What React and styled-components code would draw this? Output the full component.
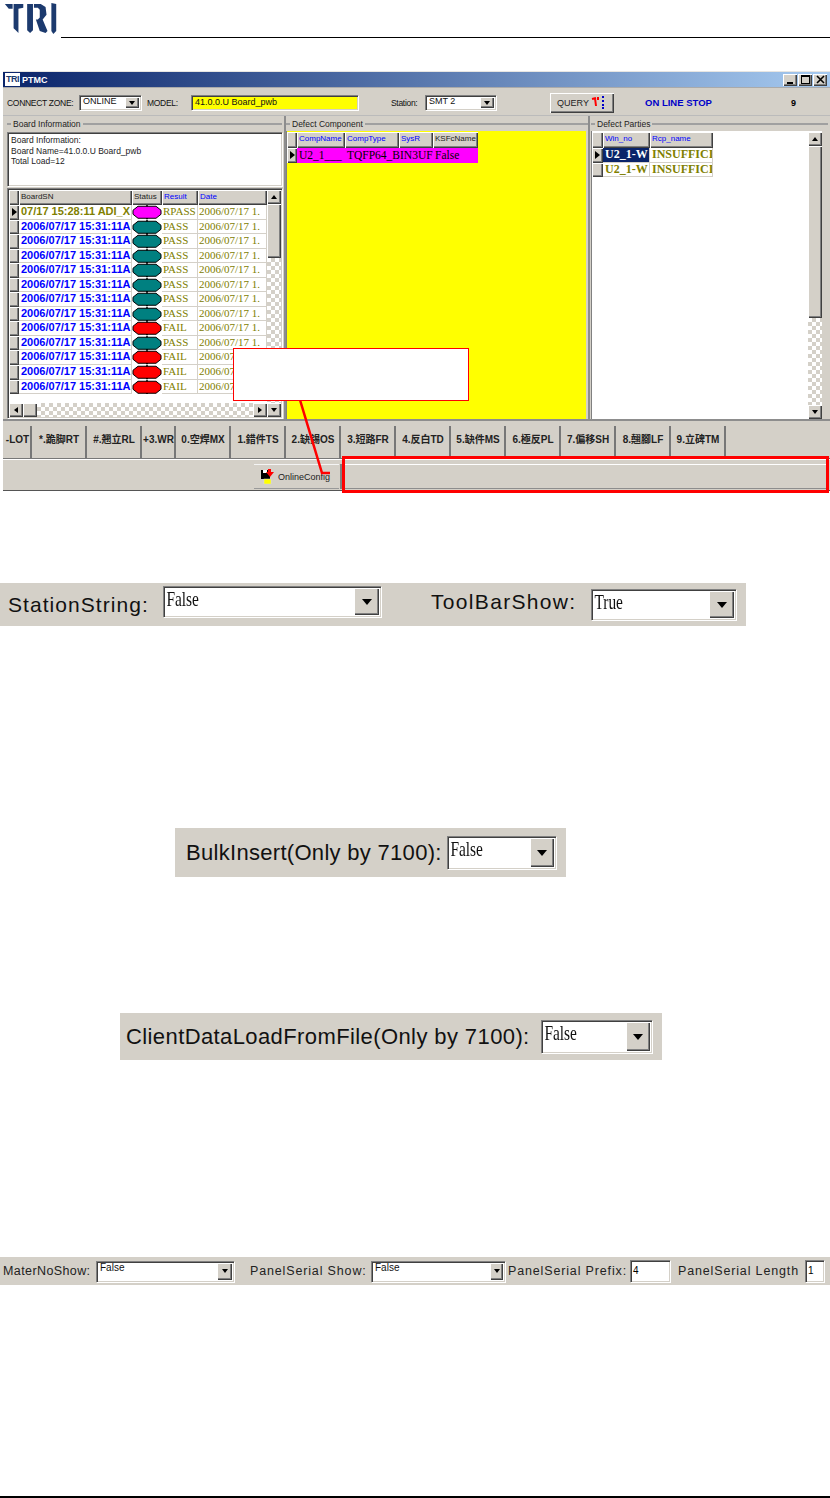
import React from 'react'
import styled, { createGlobalStyle, css } from 'styled-components'

const GlobalStyle = createGlobalStyle`
  html, body { margin: 0; padding: 0; background: #fff; }
  * { box-sizing: border-box; }
`

const FACE = '#d4d0c8'

const raised = css`
  background: ${FACE};
  box-shadow: inset 1px 1px 0 #fff, inset -1px -1px 0 #404040, inset -2px -2px 0 #808080;
`
const sunken = css`
  box-shadow: inset 1px 1px 0 #808080, inset 2px 2px 0 #404040, inset -1px -1px 0 ${FACE}, 1px 1px 0 #fff;
`

const rows = [
  ['07/17 15:28:11 ADI_X', 'magenta', 'RPASS', true],
  ...['PASS', 'PASS', 'PASS', 'PASS', 'PASS', 'PASS', 'PASS', 'FAIL', 'PASS', 'FAIL', 'FAIL', 'FAIL'].map(r => [
    '2006/07/17 15:31:11A',
    r === 'PASS' ? '#008080' : '#ff0000',
    r,
    false,
  ]),
]

const tabs = [
  ['-LOT', 27],
  ['*.跪脚RT', 54],
  ['#.翘立RL', 54],
  ['+3.WR', 33],
  ['0.空焊MX', 54],
  ['1.錯件TS', 54],
  ['2.缺錫OS', 54],
  ['3.短路FR', 54],
  ['4.反白TD', 54],
  ['5.缺件MS', 54],
  ['6.極反PL', 54],
  ['7.偏移SH', 54],
  ['8.翹腳LF', 54],
  ['9.立碑TM', 54],
]

const Logo = () => (
  <LogoSvg viewBox="0 0 56 32">
    <path d="M0 1h8v5l-4 0zM9 1h10v4l-5 1v25l-2-2-3-3z" fill="#1c3a6e" />
    <path d="M23 1h6v27l-3 3-3-3zM30 1h7l5 3 1 8-4 5 5 12-2 2-6-2-4-12h2l2-2v-8l-2-2h-4z" fill="#1c3a6e" />
    <path d="M48 0l5 1v28l-3 3-2-3z" fill="#1c3a6e" />
  </LogoSvg>
)

const Status = ({ color }) => (
  <StatusSvg viewBox="0 0 30 14">
    <path d="M15 0v14" stroke="#000" strokeWidth="2" />
    <polygon points="6,1 24,1 29,5 29,9 24,13 6,13 1,9 1,5" fill={color} stroke="#000" />
  </StatusSvg>
)

const SaveIcon = () => (
  <svg width="14" height="15" viewBox="0 0 14 15">
    <rect x="0" y="1" width="9" height="9" fill="#000" />
    <rect x="2" y="1" width="4" height="3" fill="#fff" />
    <path d="M7 0h3v3h3l-4 5-4-5h2z" fill="#f00" />
    <rect x="3" y="10" width="7" height="5" fill="#ff0" stroke="#ddd" strokeWidth=".5" />
  </svg>
)

const QueryIcon = () => (
  <svg width="16" height="14" viewBox="0 0 16 14">
    <path d="M1 3l4-1M4 2l1 8M7 1v3" stroke="#f00" strokeWidth="2" fill="none" />
    <path d="M11 1h2M11 5h2M11 9h2M11 12h2" stroke="#0000c8" strokeWidth="2" fill="none" />
  </svg>
)

const VScroll = ({ thumb, down = true }) => (
  <VBar>
    <ScrollBtn><Arrow $dir="up" /></ScrollBtn>
    <VThumb $h={thumb} />
    <Track />
    {down && <ScrollBtn><Arrow $dir="down" /></ScrollBtn>}
  </VBar>
)

const Select = ({ w, h, size, value, serif, btn, big }) => (
  <SelectBox $w={w} $h={h}>
    <SelectValue $size={size} $serif={serif} $stretch={big}>{value}</SelectValue>
    <SelectBtn $w={btn}><Arrow $dir="down" $big={big} /></SelectBtn>
  </SelectBox>
)

export default function App() {
  return (
    <Page>
      <GlobalStyle />
      <Header>
        <Logo />
        <HeaderRule />
      </Header>

      <Window>
        <TitleBar>
          <TitleIcon>TRI</TitleIcon>
          <TitleText>PTMC</TitleText>
          <WinButtons>
            <WinBtn>
              <svg width="9" height="9"><rect x="1" y="7" width="6" height="2" fill="#000" /></svg>
            </WinBtn>
            <WinBtn>
              <svg width="9" height="9"><rect x=".5" y="1.5" width="8" height="7" fill="none" stroke="#000" /><rect x="0" y="0" width="9" height="2" /></svg>
            </WinBtn>
            <WinBtn>
              <svg width="9" height="9"><path d="M1 1l7 7M8 1l-7 7" stroke="#000" strokeWidth="1.6" /></svg>
            </WinBtn>
          </WinButtons>
        </TitleBar>

        <Toolbar>
          <ToolLabel $w={72}>CONNECT ZONE:</ToolLabel>
          <Select w={62} h={15} size={9} value="ONLINE" btn={14} />
          <ToolLabel $w={44} $ml={6}>MODEL:</ToolLabel>
          <ModelInput>41.0.0.U Board_pwb</ModelInput>
          <ToolLabel $w={34} $ml={33}>Station:</ToolLabel>
          <Select w={71} h={15} size={9} value="SMT 2" btn={14} />
          <QueryButton>QUERY <QueryIcon /></QueryButton>
          <LineState>ON LINE STOP</LineState>
          <Counter>9</Counter>
        </Toolbar>

        <Panels>
          <LeftGroup>
            <GroupHead>Board Information</GroupHead>
            <Memo>
              <div>Board Information:</div>
              <div>Board Name=41.0.0.U Board_pwb</div>
              <div>Total Load=12</div>
            </Memo>
            <ResultGrid>
              <GridMain>
                <GridHead>
                  <Corner $w={10} />
                  <HeadCell $w={113} $black>BoardSN</HeadCell>
                  <HeadCell $w={30} $black>Status</HeadCell>
                  <HeadCell $w={36}>Result</HeadCell>
                  <HeadCell $w={69}>Date</HeadCell>
                </GridHead>
                {rows.map(([sn, color, result, current], i) => (
                  <ResultRow key={i}>
                    <Indicator $w={10} $on={current} />
                    <SnCell $w={113} $current={current}>{sn}</SnCell>
                    <StatusCell><Status color={color} /></StatusCell>
                    <OliveCell $w={36}>{result}</OliveCell>
                    <OliveCell $w={69}>2006/07/17 1.</OliveCell>
                  </ResultRow>
                ))}
                <GridFill />
                <HBar>
                  <ScrollBtn><Arrow $dir="left" /></ScrollBtn>
                  <HThumb />
                  <Track />
                  <ScrollBtn><Arrow $dir="right" /></ScrollBtn>
                </HBar>
              </GridMain>
              <VScroll thumb={54} />
            </ResultGrid>
          </LeftGroup>

          <MiddleGroup>
            <GroupHead>Defect Component</GroupHead>
            <YellowGrid>
              <GridHead $tall>
                <Corner $w={10} />
                <HeadCell $w={48}>CompName</HeadCell>
                <HeadCell $w={54}>CompType</HeadCell>
                <HeadCell $w={34}>SysR</HeadCell>
                <HeadCell $w={45} $black>KSFcName</HeadCell>
              </GridHead>
              <ResultRow>
                <Indicator $w={10} $on />
                <PinkCell $w={48}>U2_1___</PinkCell>
                <PinkCell $w={88}>TQFP64_BIN3UF</PinkCell>
                <PinkCell $w={45}>False</PinkCell>
              </ResultRow>
            </YellowGrid>
          </MiddleGroup>

          <RightGroup>
            <GroupHead>Defect Parties</GroupHead>
            <WhiteGrid>
              <GridMain>
                <GridHead $tall>
                  <Corner $w={11} />
                  <HeadCell $w={47}>Win_no</HeadCell>
                  <HeadCell $w={63}>Rcp_name</HeadCell>
                </GridHead>
                <ResultRow>
                  <Indicator $w={11} $on />
                  <SelectedCell $w={47}>U2_1-W</SelectedCell>
                  <PartyCell $w={63}>INSUFFICI</PartyCell>
                </ResultRow>
                <ResultRow>
                  <Indicator $w={11} />
                  <PartyCell $w={47}>U2_1-W</PartyCell>
                  <PartyCell $w={63}>INSUFFICI</PartyCell>
                </ResultRow>
              </GridMain>
              <VScroll thumb={172} />
            </WhiteGrid>
          </RightGroup>
        </Panels>

        <TabRow>
          {tabs.map(([label, w]) => (
            <TabBtn key={label} $w={w}>{label}</TabBtn>
          ))}
        </TabRow>

        <StatusBar>
          <ConfigBtn><SaveIcon />OnlineConfig</ConfigBtn>
          <Grip />
          <StatusPanel />
        </StatusBar>

        <Callout />
        <Leader width="50" height="82">
          <path d="M7 0L29 73H37" fill="none" stroke="#f00" strokeWidth="2.5" />
        </Leader>
        <Highlight />
      </Window>

      <Strip $top={92} $left={0} $w={746} $h={43}>
        <BigLabel $ml={8} $w={155} $size={21} $space={1.05}>StationString:</BigLabel>
        <StripSelect $up={6}><Select w={218} h={31} size={22} value="False" serif big btn={25} /></StripSelect>
        <BigLabel $ml={50} $w={160} $size={21} $space={1.33} $up={6}>ToolBarShow:</BigLabel>
        <StripSelect><Select w={145} h={31} size={22} value="True" serif big btn={25} /></StripSelect>
      </Strip>

      <Strip $top={202} $left={175} $w={391} $h={49}>
        <BigLabel $ml={11} $w={261} $size={22} $space={0.3}>BulkInsert(Only by 7100):</BigLabel>
        <Select w={109} h={33} size={22} value="False" serif big btn={24} />
      </Strip>

      <Strip $top={136} $left={120} $w={542} $h={47}>
        <BigLabel $ml={6} $w={415} $size={22} $space={0.4}>ClientDataLoadFromFile(Only by 7100):</BigLabel>
        <Select w={111} h={33} size={22} value="False" serif big btn={24} />
      </Strip>

      <Strip $top={197} $left={0} $w={830} $h={28}>
        <SmallLabel $ml={3} $w={93} $space={0.4}>MaterNoShow:</SmallLabel>
        <Select w={138} h={21} size={10} value="False" btn={15} />
        <SmallLabel $ml={16} $w={121}>PanelSerial Show:</SmallLabel>
        <Select w={134} h={21} size={10} value="False" btn={13} />
        <SmallLabel $ml={3} $w={122}>PanelSerial Prefix:</SmallLabel>
        <SmallInput $w={40}>4</SmallInput>
        <SmallLabel $ml={8} $w={127}>PanelSerial Length</SmallLabel>
        <SmallInput $w={19}>1</SmallInput>
      </Strip>

      <FooterRule />
    </Page>
  )
}

const Page = styled.div`
  width: 830px;
  height: 1498px;
  overflow: hidden;
  background: #fff;
  font-family: "Liberation Sans", Arial, sans-serif;
`

const Header = styled.div`
  height: 38px;
  display: flex;
  align-items: flex-start;
  padding: 3px 0 0 4px;
  gap: 1px;
`
const LogoSvg = styled.svg`
  width: 56px;
  height: 31px;
  flex: none;
  filter: blur(0.5px);
`
const HeaderRule = styled.div`
  flex: 1;
  height: 1px;
  margin-top: 34px;
  background: #000;
`

const Window = styled.div`
  position: relative;
  width: 827px;
  height: 420px;
  margin: 33px 0 0 3px;
  background: ${FACE};
  border-top: 1px solid #e8e6e2;
  border-bottom: 1px solid #555;
  display: flex;
  flex-direction: column;
`
const TitleBar = styled.div`
  height: 15px;
  flex: none;
  display: flex;
  align-items: center;
  padding: 0 3px 0 2px;
  background: linear-gradient(90deg, #0a246a, #a6caf0);
`
const TitleIcon = styled.span`
  width: 15px;
  height: 13px;
  background: #fff;
  color: #1c3a6e;
  font: bold 9px/13px "Liberation Sans", sans-serif;
  letter-spacing: -0.5px;
  text-align: center;
`
const TitleText = styled.span`
  margin-left: 2px;
  color: #fff;
  font: bold 9px "Liberation Sans", sans-serif;
`
const WinButtons = styled.div`
  margin-left: auto;
  display: flex;
  gap: 1px;
`
const WinBtn = styled.div`
  ${raised}
  width: 14px;
  height: 12px;
  display: flex;
  align-items: center;
  justify-content: center;
`

const Toolbar = styled.div`
  height: 29px;
  flex: none;
  display: flex;
  align-items: center;
  padding: 2px 0 0 4px;
  border-top: 1px solid #aaa;
  border-bottom: 1px solid #bbb;
`
const ToolLabel = styled.span`
  width: ${p => p.$w}px;
  margin-left: ${p => p.$ml || 0}px;
  flex: none;
  font-size: 8.5px;
  letter-spacing: -0.3px;
  color: #111;
  white-space: nowrap;
`
const ModelInput = styled.div`
  width: 167px;
  height: 15px;
  flex: none;
  padding-left: 4px;
  background: #ff0;
  font-size: 9px;
  line-height: 15px;
  color: #111;
  ${sunken}
`
const QueryButton = styled.div`
  ${raised}
  width: 64px;
  height: 20px;
  flex: none;
  margin-left: 54px;
  display: flex;
  align-items: center;
  justify-content: center;
  gap: 2px;
  font-size: 9px;
  color: #222;
`
const LineState = styled.span`
  width: 76px;
  flex: none;
  margin-left: 31px;
  color: #0000c8;
  font-size: 9.5px;
  font-weight: bold;
  white-space: nowrap;
`
const Counter = styled.span`
  margin-left: 70px;
  font-size: 9px;
  font-weight: bold;
`

const Panels = styled.div`
  height: 303px;
  flex: none;
  display: flex;
  padding-left: 2px;
`
const LeftGroup = styled.div`
  width: 279px;
  flex: none;
  display: flex;
  flex-direction: column;
  padding: 0 2px;
`
const MiddleGroup = styled(LeftGroup)`
  width: 304px;
  border-left: 2px solid #8d8d8d;
  padding: 0;
`
const RightGroup = styled(LeftGroup)`
  width: 240px;
  border-left: 2px solid #8d8d8d;
  padding: 0 0 0 1px;
`
const GroupHead = styled.div`
  height: 15px;
  flex: none;
  display: flex;
  align-items: center;
  gap: 2px;
  font-size: 8.5px;
  color: #222;
  white-space: nowrap;
  &::before, &::after {
    content: "";
    height: 2px;
    background: #a0a0a0;
  }
  &::before { width: 4px; }
  &::after { flex: 1; }
`
const Memo = styled.div`
  height: 54px;
  flex: none;
  margin-top: 1px;
  padding: 3px 4px;
  background: #fff;
  font-size: 8.5px;
  line-height: 10.5px;
  color: #222;
  ${sunken}
`
const ResultGrid = styled.div`
  margin-top: 2px;
  height: 230px;
  flex: none;
  display: flex;
  padding: 2px 1px 1px 2px;
  background: #fff;
  ${sunken}
`
const GridMain = styled.div`
  flex: 1;
  min-width: 0;
  display: flex;
  flex-direction: column;
`
const GridHead = styled.div`
  height: ${p => (p.$tall ? 16 : 15)}px;
  flex: none;
  display: flex;
`
const HeadCell = styled.div`
  ${raised}
  width: ${p => p.$w}px;
  flex: none;
  padding-left: 2px;
  overflow: hidden;
  white-space: nowrap;
  font-size: 8px;
  line-height: 14px;
  color: ${p => (p.$black ? '#222' : '#0000ff')};
`
const Corner = styled.div`
  ${raised}
  width: ${p => p.$w}px;
  flex: none;
`
const ResultRow = styled.div`
  height: 14.55px;
  flex: none;
  display: flex;
`
const Indicator = styled.div`
  ${raised}
  position: relative;
  width: ${p => p.$w}px;
  flex: none;
  ${p => p.$on && css`
    &::after {
      content: "";
      position: absolute;
      left: 3px;
      top: 3px;
      border: 4px solid transparent;
      border-left: 5px solid #000;
      border-right: 0;
    }
  `}
`
const Cell = styled.div`
  width: ${p => p.$w}px;
  flex: none;
  overflow: hidden;
  white-space: nowrap;
  padding-left: 2px;
  border-right: 1px solid ${FACE};
  border-bottom: 1px solid ${FACE};
`
const SnCell = styled(Cell)`
  color: ${p => (p.$current ? '#808000' : '#0000ff')};
  font-size: 11px;
  font-weight: bold;
  line-height: 13px;
`
const StatusCell = styled.div`
  width: 30px;
  flex: none;
  display: flex;
`
const StatusSvg = styled.svg`
  width: 30px;
  height: 14.5px;
  display: block;
`
const OliveCell = styled(Cell)`
  padding-left: 1px;
  color: #808000;
  font-family: "Liberation Serif", serif;
  font-size: 11px;
  line-height: 13px;
`
const GridFill = styled.div`
  flex: 1;
`
const HBar = styled.div`
  height: 14px;
  flex: none;
  display: flex;
`
const VBar = styled.div`
  width: 14px;
  flex: none;
  display: flex;
  flex-direction: column;
`
const ScrollBtn = styled.div`
  ${raised}
  width: 14px;
  height: 14px;
  flex: none;
  display: flex;
  align-items: center;
  justify-content: center;
`
const Track = styled.div`
  flex: 1;
  background: repeating-conic-gradient(${FACE} 0 25%, #fff 0 50%) 0 0 / 8px 8px;
`
const VThumb = styled.div`
  ${raised}
  height: ${p => p.$h}px;
  flex: none;
`
const HThumb = styled.div`
  ${raised}
  width: 14px;
  flex: none;
`
const arrows = {
  up: 'border-width: 0 3.5px 4px; border-color: transparent transparent #000;',
  down: 'border-width: 4px 3.5px 0; border-color: #000 transparent transparent;',
  left: 'border-width: 3.5px 4px 3.5px 0; border-color: transparent #000 transparent transparent;',
  right: 'border-width: 3.5px 0 3.5px 4px; border-color: transparent transparent transparent #000;',
}
const Arrow = styled.span`
  width: 0;
  height: 0;
  border-style: solid;
  ${p => arrows[p.$dir]}
  ${p => p.$big && 'border-width: 6px 5px 0;'}
`

const YellowGrid = styled.div`
  height: 288px;
  flex: none;
  margin-right: 2px;
  display: flex;
  flex-direction: column;
  padding: 1px 0 0 1px;
  background: #ff0;
  box-shadow: inset 1px 0 0 #808080;
`
const PinkCell = styled(Cell)`
  background: #f0f;
  border: 0;
  color: #000;
  font-family: "Liberation Serif", serif;
  font-size: 11.5px;
  line-height: 14px;
`
const WhiteGrid = styled.div`
  height: 288px;
  width: 231px;
  flex: none;
  display: flex;
  padding: 1px 0 0 1px;
  background: #fff;
  box-shadow: inset 1px 0 0 #808080;
`
const PartyCell = styled(Cell)`
  color: #808000;
  font-family: "Liberation Serif", serif;
  font-size: 12px;
  font-weight: bold;
  line-height: 13px;
`
const SelectedCell = styled(PartyCell)`
  background: #0a246a;
  color: #fff;
`

const TabRow = styled.div`
  height: 40px;
  flex: none;
  display: flex;
  align-items: stretch;
  gap: 1px;
  padding: 5px 0 0 2px;
  border-top: 2px solid #8d8d8d;
  border-bottom: 1px solid #777;
`
const TabBtn = styled.div`
  width: ${p => p.$w}px;
  flex: none;
  border-right: 2px solid #777;
  font-family: "Liberation Sans", "Noto Sans CJK TC", sans-serif;
  font-size: 10px;
  font-weight: bold;
  line-height: 28px;
  text-align: center;
  white-space: nowrap;
  overflow: hidden;
  color: #222;
`

const StatusBar = styled.div`
  flex: 1;
  display: flex;
  justify-content: flex-end;
  align-items: stretch;
  padding: 4px 2px 1px 251px;
  border-top: 1px solid #fff;
`
const ConfigBtn = styled.div`
  width: 85px;
  flex: none;
  display: flex;
  align-items: center;
  gap: 3px;
  padding-left: 7px;
  border-top: 1px solid #f4f4f4;
  border-bottom: 1px solid #999;
  font-size: 9px;
  white-space: nowrap;
  overflow: hidden;
  color: #222;
`
const Grip = styled.div`
  width: 3px;
  flex: none;
  margin: 0 2px 0 1px;
  background: #808080;
`
const StatusPanel = styled.div`
  flex: 1;
  border-top: 1px solid #fff;
  border-bottom: 1px solid #8d8d8d;
  border-right: 1px solid #8d8d8d;
`

const Callout = styled.div`
  position: absolute;
  left: 230px;
  top: 276px;
  width: 236px;
  height: 53px;
  background: #fff;
  border: 1px solid #f00;
`
const Leader = styled.svg`
  position: absolute;
  left: 290px;
  top: 328px;
`
const Highlight = styled.div`
  position: absolute;
  left: 339px;
  top: 384px;
  width: 487px;
  height: 37px;
  border: 3px solid #f00;
`

const Strip = styled.div`
  width: ${p => p.$w}px;
  height: ${p => p.$h}px;
  margin: ${p => p.$top}px 0 0 ${p => p.$left}px;
  display: flex;
  align-items: center;
  background: ${FACE};
  overflow: hidden;
`
const BigLabel = styled.span`
  width: ${p => p.$w}px;
  margin-left: ${p => p.$ml}px;
  padding-bottom: ${p => p.$up || 0}px;
  flex: none;
  font-size: ${p => p.$size}px;
  letter-spacing: ${p => p.$space}px;
  color: #111;
  white-space: nowrap;
`
const SmallLabel = styled.span`
  width: ${p => p.$w}px;
  margin-left: ${p => p.$ml}px;
  flex: none;
  font-size: 12.5px;
  letter-spacing: ${p => p.$space ?? 0.85}px;
  color: #222;
  white-space: nowrap;
`
const StripSelect = styled.div`
  flex: none;
  padding-bottom: ${p => p.$up || 0}px;
`
const SelectBox = styled.div`
  width: ${p => p.$w}px;
  height: ${p => p.$h}px;
  flex: none;
  display: flex;
  justify-content: space-between;
  padding: 2px;
  background: #fff;
  ${sunken}
`
const SelectValue = styled.span`
  padding-left: 2px;
  font-family: ${p => (p.$serif ? '"Liberation Serif", serif' : '"Liberation Sans", sans-serif')};
  font-size: ${p => p.$size}px;
  line-height: 1;
  color: #111;
  ${p => p.$stretch && css`
    display: inline-block;
    transform: scaleX(0.7);
    transform-origin: left top;
  `}
`
const SelectBtn = styled.span`
  ${raised}
  width: ${p => p.$w}px;
  flex: none;
  display: flex;
  align-items: center;
  justify-content: center;
`
const SmallInput = styled.div`
  width: ${p => p.$w}px;
  height: 22px;
  flex: none;
  padding-left: 3px;
  background: #fff;
  font-size: 10px;
  line-height: 22px;
  ${sunken}
`

const FooterRule = styled.div`
  height: 2px;
  margin-top: 211px;
  background: #000;
`
